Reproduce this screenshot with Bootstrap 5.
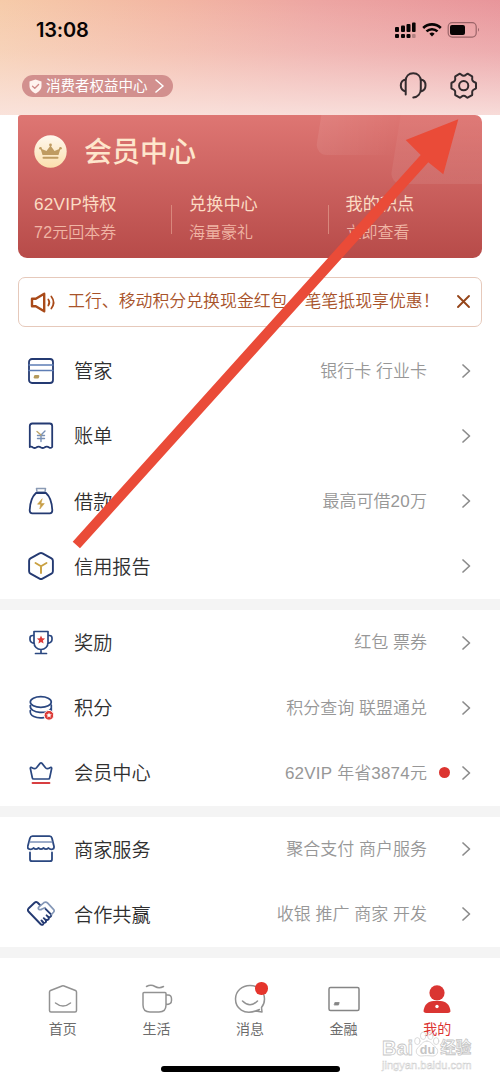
<!DOCTYPE html>
<html lang="zh-CN">
<head>
<meta charset="utf-8">
<meta name="viewport" content="width=device-width, initial-scale=1">
<title>我的</title>
<link href="https://cdn.jsdelivr.net/npm/bootstrap@5.3.0/dist/css/bootstrap.min.css" rel="stylesheet">
<style>
body{font-family:"Liberation Sans","Noto Sans CJK SC",sans-serif;color:#333;background:#fff;width:500px;height:1082px;line-height:1.2}
svg{display:block;fill:none;stroke-linecap:round;stroke-linejoin:round;flex:none}
.screen{width:500px;height:1082px}
.top-area{height:115px;background:linear-gradient(to bottom,rgba(250,230,225,0) 0%,rgba(250,230,225,.3) 45%,rgba(250,230,226,.88) 100%),linear-gradient(97deg,#f6cba9 0%,#f3b7a3 32%,#eda5a2 62%,#e8949a 100%)}
.status-bar{height:60px;padding:0 20px 0 36px}
.clock{font-family:Inter,sans-serif;font-weight:600;font-size:20px;color:#080404;letter-spacing:-.2px}
.rights-pill{height:22px;width:151px;background:#d2908e;color:#fff;font-size:14.5px;padding-left:7px}
.tools{padding:0 22px 0 22px;height:52px}
.vip{margin:0 18px;height:143px;border-radius:3px 7px 9px 9px;background:linear-gradient(#de7673,#b74b49);color:#fbdcc4}
.vip-title{font-size:28px;font-weight:500;color:#fee6cc;padding-top:2px}
.vip-shape{position:absolute;border-radius:0 0 0 12px;transform:skewX(-9deg);background:linear-gradient(rgba(255,255,255,.02),rgba(255,255,255,.08))}
.vip-shape.fading{background:linear-gradient(90deg,rgba(255,255,255,.08),rgba(255,255,255,0))}
.vip-cols{position:relative;padding:0 0 0 16px}
.vip-cols>div{width:155px}
.vip-h{font-size:17.2px;line-height:22px}
.vip-s{font-size:16px;line-height:22px;margin-top:7px;color:#f0b5a5;font-weight:350}
.wide-latin{letter-spacing:.25px}
.vip-line{position:absolute;width:1px;height:29px;background:#d9877c}
.notice{margin:18.5px 18px 0;height:50px;border:1px solid #e6c9bb;border-radius:7px;color:#a8532a;font-size:16.9px;padding:0 10px 0 11px;font-weight:350}
.menu-row{height:65.2px;padding:0 28px 0 27px}
.menu-name{font-size:19.2px;margin-left:19px;font-weight:350;color:#303030;padding-top:2px}
.menu-note{font-size:17px;color:#979797;font-weight:350;white-space:nowrap;text-align:right;margin-right:34px;padding-top:2px}
.menu-note.has-dot{margin-right:12px}
.menu-dot{width:11px;height:11px;border-radius:50%;background:#dc3430;margin-right:11px}
.band{height:11px;background:#f4f4f4}
.tabs{padding:23.500px 16px 0;height:94px}
.tabs>div{width:93.6px;font-size:14px;color:#6c6c6c;font-weight:400}
.tabs span{margin-top:5px;line-height:18px}
.tab-dot{position:absolute;width:12.5px;height:12.5px;border-radius:50%;background:#e5352c;left:52px;top:1px}
.home-bar{width:179px;height:6px;border-radius:3px;background:#000;left:161px;top:1066px}
.arrow-mark{left:0;top:0;z-index:5}
.watermark{left:382px;top:1027px;z-index:4;color:#fff;width:92px}
.wm-line{font-size:20px;line-height:20px;font-weight:700;-webkit-text-stroke:.8px #c6c6c6;height:30px;white-space:nowrap;padding-top:11px}
.wm-url{font-size:11.1px;line-height:12px;-webkit-text-stroke:.45px #ccc;margin-top:2px;white-space:nowrap}
</style>
</head>
<body>
<div class="screen position-relative overflow-hidden">
<header class="top-area">
  <div class="status-bar d-flex align-items-center justify-content-between">
    <span class="clock">13:08</span>
    <svg width="86" height="20" viewBox="394 20 86 20">
      <g fill="#080404"><rect x="395" y="27" width="4" height="5" rx="1"/><rect x="401" y="25.5" width="4" height="6.5" rx="1"/><rect x="406.5" y="24" width="4" height="8" rx="1"/><rect x="412" y="22.5" width="3.6" height="9.5" rx="1"/><rect x="395" y="34" width="4" height="4" rx="1"/><rect x="401" y="34" width="4" height="4" rx="1"/><rect x="406.5" y="34" width="4" height="4" rx="1"/><rect x="412" y="34" width="3.6" height="4" rx="1" opacity=".25"/>
      <path d="M432 36.5l-2.6-2.7a3.8 3.8 0 0 1 5.2 0z"/></g>
      <g stroke="#080404" stroke-width="2.6" stroke-linecap="butt"><path d="M423.2 28a12.6 12.6 0 0 1 17.6 0M426.5 31.4a8 8 0 0 1 11 0"/></g>
      <rect x="448.2" y="22.7" width="28" height="14.4" rx="4" stroke="#9a6468" stroke-width="1.2"/><rect x="450" y="25" width="15" height="10" rx="2" fill="#080404"/><path d="M478 27.8q2 2 0 4z" fill="#9a6468"/>
    </svg>
  </div>
  <div class="tools d-flex align-items-center">
    <div class="rights-pill rounded-pill d-flex align-items-center">
      <svg width="13" height="15" viewBox="0 0 13 15"><path d="M6.5.5L12.5 2.6V7c0 3.6-3 6-6 7.5C3.5 13 .5 10.6.5 7V2.6z" fill="#fff3ef"/><path d="M3.5 7.2L5.8 9.3 9.6 5.5" stroke="#cf8a88" stroke-width="1.3"/></svg>
      <span class="ms-1" style="padding-top:1px">消费者权益中心</span>
      <svg class="ms-auto me-2" width="11" height="14" viewBox="0 0 11 14"><path d="M2 1l7 6-7 6" stroke="#fff" stroke-width="1.6"/></svg>
    </div>
    <svg class="ms-auto" width="80" height="30" viewBox="398 71 80 30" stroke="#332b2e" stroke-width="2">
      <path d="M405.7 94.5V81c0-4.6 3-7.8 7.5-7.8s7.6 3.2 7.6 7.8v8c0 4.5-3 8-7.5 8.4M405.7 79.5c-3 .3-4.9 3-4.9 6 0 3.3 1.9 5.3 4.9 6M420.8 79.5c3 .3 4.7 3 4.7 6 0 3.3-1.7 5.3-4.7 6"/>
      <circle cx="463.7" cy="85.7" r="4.6"/>
      <path d="M459.8 73.7c1 0 1.9 2 3.9 2s2.9-2 3.9-2l4.500 2.600c.6 1-.5 2.600.4 4.300 1 1.700 2.900 1.500 3.500 2.500v5.200c-.6 1-2.500.8-3.500 2.500-.9 1.700.2 3.400-.4 4.300l-4.500 2.600c-1 0-1.900-2-3.900-2s-2.900 2-3.900 2l-4.500-2.600c-.6-.9.500-2.600-.4-4.300-1-1.700-2.900-1.500-3.500-2.500v-5.200c.6-1 2.500-.8 3.500-2.500.9-1.700-.2-3.300.4-4.300z"/>
    </svg>
  </div>
</header>
<section class="vip position-relative overflow-hidden">
  <div class="vip-shape fading" style="left:301px;top:-10px;width:80px;height:50px"></div>
  <div class="vip-shape" style="left:378px;top:-10px;width:120px;height:79px"></div>
  <div class="d-flex align-items-center" style="height:73px;padding-left:16px">
    <svg width="33" height="33" viewBox="0 0 33 33"><defs><linearGradient id="gold" x2="0" y2="1"><stop stop-color="#fff8ee"/><stop offset="1" stop-color="#fbdfad"/></linearGradient></defs><circle cx="16.500" cy="16.500" r="16.200" fill="url(#gold)"/><path d="M8.500 20L6.500 13.500l6 2.500 4-5.500 4 5.500 6-2.500-2 6.500z" fill="#bf9b61"/><path d="M9.500 22.700h14" stroke="#bf9b61" stroke-width="2"/><g fill="#bf9b61"><circle cx="6.500" cy="13.200" r="1.300"/><circle cx="16.500" cy="10" r="1.400"/><circle cx="26.500" cy="13.200" r="1.300"/></g></svg>
    <span class="vip-title" style="margin-left:17px">会员中心</span>
  </div>
  <div class="vip-cols d-flex" style="padding-top:5px">
    <div><div class="vip-h"><span class="wide-latin">62VIP</span>特权</div><div class="vip-s"><span class="wide-latin">72</span>元回本券</div></div>
    <div style="width:156.500px"><div class="vip-h">兑换中心</div><div class="vip-s">海量豪礼</div></div>
    <div style="width:120px"><div class="vip-h">我的积点</div><div class="vip-s">立即查看</div></div>
    <i class="vip-line" style="left:153px;top:17px"></i><i class="vip-line" style="left:310px;top:17px"></i>
  </div>
</section>
<div class="notice d-flex align-items-center position-relative">
  <svg width="27" height="22" viewBox="30 290 27 22" stroke="#a94a19"><path d="M32 297.700v7.600h3.800l8.400 5v-17.600l-8.400 5z" stroke-width="2.400"/><path d="M48.300 298.500q2.200 3 0 6M51.300 295.500q4.600 6 0 12" stroke-width="1.700"/></svg>
  <span class="text-nowrap" style="margin-left:11px;padding-top:2px">工行、移动积分兑换现金红包，笔笔抵现享优惠！</span>
  <svg class="position-absolute" style="left:437px" width="15" height="15" viewBox="0 0 15 15"><path d="M2 2l11 11M13 2L2 13" stroke="#954519" stroke-width="1.900"/></svg>
</div>
<main style="margin-top:11.700px">
  <div class="menu-row d-flex align-items-center"><svg width="28" height="28" viewBox="0 0 28 28" stroke="#243a72" stroke-width="1.800"><rect x="2" y="2" width="24" height="24" rx="3"/><path d="M2 8h24M2 13.500h24" stroke="#5e7db5" stroke-width="1.300"/><path d="M7.500 20.500h3.500l.5-1.500H8z" stroke="#b69a5b" fill="#b69a5b"/></svg><span class="menu-name">管家</span><span class="menu-note ms-auto">银行卡 行业卡</span><svg width="11" height="16" viewBox="0 0 11 16"><path d="M2 2l6.500 6L2 14" stroke="#8c8c8c" stroke-width="1.700"/></svg></div>
  <div class="menu-row d-flex align-items-center"><svg width="28" height="28" viewBox="0 0 28 28" stroke="#243a72" stroke-width="1.800"><path d="M2.800 25V4q0-2.500 2.500-2.500h17.400q2.500 0 2.500 2.500v21q-1.400 1.500-3 .5-2.400-1.800-4.800 0-1.700 1-3.400 0-2.400-1.800-4.800 0-1.600 1-3.200 0-1.700-1.300-3.200-.5z"/><g stroke="#7890b5" stroke-width="1.400"><path d="M14 13v6.500M10.500 13.500h7M10.500 16.500h7M18 9l-4 4"/><path d="M10 9.500l4 3.500" stroke="#c0a568"/></g></svg><span class="menu-name">账单</span><svg class="ms-auto" width="11" height="16" viewBox="0 0 11 16"><path d="M2 2l6.500 6L2 14" stroke="#8c8c8c" stroke-width="1.700"/></svg></div>
  <div class="menu-row d-flex align-items-center"><svg width="28" height="28" viewBox="0 0 28 28" stroke="#243a72" stroke-width="1.800"><path d="M10 5L9.500 1.500h9L18 5z" stroke="#8a9ab4" stroke-width="1.500"/><path d="M9 6h10c4.500 4 6 9 6.300 17.500q0 2.800-2.600 2.800H5.300q-2.600 0-2.600-2.800C3 15 4.500 10 9 6z"/><path d="M15 12l-4.500 5.200h3.200L12.800 22l4.500-5.400h-3.200z" fill="#c79d45" stroke="#c79d45" stroke-width=".6"/></svg><span class="menu-name">借款</span><span class="menu-note ms-auto">最高可借<span class="wide-latin">20</span>万</span><svg width="11" height="16" viewBox="0 0 11 16"><path d="M2 2l6.500 6L2 14" stroke="#8c8c8c" stroke-width="1.700"/></svg></div>
  <div class="menu-row d-flex align-items-center"><svg width="28" height="28" viewBox="0 0 28 28" stroke="#243a72" stroke-width="1.900"><path d="M12.500 1.400q1.500-.8 3 0l9 5q1.400.8 1.400 2.400v10.400q0 1.600-1.400 2.400l-9 5q-1.500.8-3 0l-9-5q-1.400-.8-1.400-2.400V8.800q0-1.600 1.400-2.400z"/><path d="M8.500 11l5.500 3.200 5.500-3.200M14 14.200V21" stroke="#c9a040"/></svg><span class="menu-name">信用报告</span><svg class="ms-auto" width="11" height="16" viewBox="0 0 11 16"><path d="M2 2l6.500 6L2 14" stroke="#8c8c8c" stroke-width="1.700"/></svg></div>
  <div class="band"></div>
  <div class="menu-row d-flex align-items-center"><svg width="28" height="28" viewBox="0 0 28 28" stroke="#2a4780" stroke-width="1.700"><path d="M7 2.500h14v11c0 4-3 7-7 7s-7-3-7-7zM7 6.500H5.500Q3 6.500 3 9v1.500q0 3 4.300 4M21 6.500h1.500Q25 6.500 25 9v1.500q0 3-4.300 4M14 20.500V24M8.500 24.500h11"/><path d="M14 6.500l1.200 2.700 2.900.3-2.200 2 .7 2.900-2.600-1.500-2.600 1.500.7-2.900-2.200-2 2.900-.3z" fill="#dc3b38" stroke="none"/></svg><span class="menu-name">奖励</span><span class="menu-note ms-auto">红包 票券</span><svg width="11" height="16" viewBox="0 0 11 16"><path d="M2 2l6.500 6L2 14" stroke="#8c8c8c" stroke-width="1.700"/></svg></div>
  <div class="menu-row d-flex align-items-center"><svg width="28" height="28" viewBox="0 0 28 28" stroke="#2a4780" stroke-width="1.700"><ellipse cx="13.800" cy="8" rx="10.500" ry="5.300"/><path d="M3.300 11.500c-1 8.500 19.500 9 21 2.500v-3M3.300 16.500c-1 5.500 6 8.300 13.500 7.200M24.300 14v2.500"/><circle cx="22" cy="21.300" r="4.900" fill="#dc3b38" stroke="#fff" stroke-width="1"/><path d="M22 18.500l.8 1.800 2 .1-1.500 1.300.5 2-1.800-1.100-1.800 1.100.5-2-1.500-1.300 2-.1z" fill="#fff" stroke="none"/></svg><span class="menu-name">积分</span><span class="menu-note ms-auto">积分查询 联盟通兑</span><svg width="11" height="16" viewBox="0 0 11 16"><path d="M2 2l6.500 6L2 14" stroke="#8c8c8c" stroke-width="1.700"/></svg></div>
  <div class="menu-row d-flex align-items-center"><svg width="28" height="28" viewBox="0 0 28 28" stroke="#2a4780" stroke-width="1.700"><path d="M6.700 20q-1.200 0-1.400-1.200L3.300 9.300c0-1 1-1.300 1.600-.6 1.200 1.200 3.500 1.200 4.600 0L13 4.400q1-1.100 2 0l3.500 4.300c1.100 1.200 3.400 1.200 4.600 0 .6-.7 1.600-.4 1.600.6l-2 9.500q-.2 1.200-1.400 1.200z"/><path d="M5.500 24h17" stroke="#d83e40" stroke-width="1.800"/></svg><span class="menu-name">会员中心</span><span class="menu-note has-dot ms-auto"><span class="wide-latin">62VIP</span> 年省<span class="wide-latin">3874</span>元</span><i class="menu-dot"></i><svg width="11" height="16" viewBox="0 0 11 16"><path d="M2 2l6.500 6L2 14" stroke="#8c8c8c" stroke-width="1.700"/></svg></div>
  <div class="band"></div>
  <div class="menu-row d-flex align-items-center"><svg width="28" height="28" viewBox="0 0 28 28" stroke="#2a4780" stroke-width="1.800"><path d="M5.500 1.200h17q2 0 2.500 2l2 8.300q.3 2.200-1.500 2.700-2.500.5-4-1.200-2.500 2.300-5 0-2.500 2.300-5 0-2.500 2.300-5 0-1.500 1.700-4 1.200Q.3 13.700.7 11.500l2.200-8.300q.6-2 2.600-2z"/><path d="M3 7h22" stroke="#7d93b9" stroke-width="1.400"/><path d="M3 17.500v6.700q0 2 2 2h18q2 0 2-2v-6.700"/></svg><span class="menu-name">商家服务</span><span class="menu-note ms-auto">聚合支付 商户服务</span><svg width="11" height="16" viewBox="0 0 11 16"><path d="M2 2l6.500 6L2 14" stroke="#8c8c8c" stroke-width="1.700"/></svg></div>
  <div class="menu-row d-flex align-items-center"><svg width="28" height="28" viewBox="0 0 28 28" stroke="#243a72" stroke-width="1.900"><path d="M13 5L10.500 2.500Q9 1.500 7.500 2.700L1.500 8.500Q.3 10 1.500 11.500l12 12.500q1.500 1.500 2.600.3 1-1-.2-2.300l-1.400-1.500M15.500 22q1.800 1.500 3 .4 1.200-1.200-.2-2.700l-1.500-1.500M18.500 19.500q1.800 1.200 2.800 0 1.200-1.300-.2-2.700l-1.500-1.500M21 16.700q1.800 1 2.800-.2 1-1.300-.3-2.600l-5-5.100"/><path d="M24.500 14.500l2-2.200q1.300-1.500 0-3l-6-6.400q-1.500-1.500-3.500-.3l-5 4.200q-1.500 1.700 0 2.600 1.500.7 3-.4l3-1.300" stroke="#8497b7" stroke-width="1.700"/></svg><span class="menu-name">合作共赢</span><span class="menu-note ms-auto">收银 推广 商家 开发</span><svg width="11" height="16" viewBox="0 0 11 16"><path d="M2 2l6.500 6L2 14" stroke="#8c8c8c" stroke-width="1.700"/></svg></div>
  <div class="band"></div>
</main>
<nav class="tabs d-flex">
  <div class="d-flex flex-column align-items-center"><svg width="34" height="34" viewBox="0 0 34 34" stroke="#929292" stroke-width="1.500"><path d="M3.500 11q0-1 1-1.500L16 5q1-.4 2 0l11.500 4.500q1 .5 1 1.500v18.500q0 1.500-1.500 1.500H5q-1.500 0-1.500-1.500z"/><path d="M9.500 22q7.500 6 15 0"/></svg><span>首页</span></div>
  <div class="d-flex flex-column align-items-center"><svg width="34" height="34" viewBox="0 0 34 34" stroke="#929292" stroke-width="1.500"><path d="M5 11.500h21q1 0 1 1V24q0 7-7 7h-9q-7 0-7-7V12.500q0-1 1-1zM27 14h2q3.500 0 3.500 4v1.500q0 4-5.500 4M7.500 5.500q4.500-2.500 8.500 0t8.500 0"/></svg><span>生活</span></div>
  <div class="d-flex flex-column align-items-center position-relative"><svg width="34" height="34" viewBox="0 0 34 34" stroke="#929292" stroke-width="1.500"><path d="M26.500 28.500C10 36 2.500 26 2.500 18S9 4.500 17 4.500 31.500 10 31.500 18q0 5-3 8.500l.5 4.500-6.500-1"/><path d="M9.500 20q7.500 7.500 15 0"/></svg><i class="tab-dot"></i><span>消息</span></div>
  <div class="d-flex flex-column align-items-center"><svg width="34" height="34" viewBox="0 0 34 34" stroke="#858585" stroke-width="1.500"><rect x="2" y="6.500" width="30" height="23" rx="1.500"/><path d="M7.500 24h4l.7-2.500h-4z" fill="#858585" stroke-width=".8"/></svg><span>金融</span></div>
  <div class="d-flex flex-column align-items-center" style="color:#dc3431"><svg width="34" height="34" viewBox="0 0 34 34"><circle cx="17" cy="11.800" r="7.600" fill="#da3532"/><path d="M3.500 30.500C4 23.500 8.500 20 13.500 20h7c5 0 9.500 3.500 10 10.500q-1 1.500-3 1.500h-21q-2 0-3-1.500z" fill="#da3532"/><circle cx="17" cy="25.500" r="1.700" fill="#fff"/></svg><span>我的</span></div>
</nav>
<div class="home-bar position-absolute"></div>
<div class="watermark position-absolute">
  <div class="wm-line d-flex"><span>Bai</span><svg width="27" height="28" viewBox="0 0 28 28" style="margin:-9px 0 0;overflow:visible" stroke="#cfcfcf" stroke-width=".8"><g fill="#fff" fill-opacity=".55"><ellipse cx="4.500" cy="12" rx="2.800" ry="3.600"/><ellipse cx="10.500" cy="6.500" rx="2.800" ry="3.800"/><ellipse cx="18" cy="6.500" rx="2.800" ry="3.800"/><ellipse cx="24" cy="12" rx="2.800" ry="3.600"/><path fill-opacity="1" d="M14.500 12c4 0 6 4 9.500 7s1 9-4 8.500-7-.5-11 0-8-4.500-4-8.500 5.500-7 9.500-7z"/></g><text x="7" y="25" font-size="13" stroke="none" fill="#c4c4c4" style="-webkit-text-stroke:0">du</text></svg><span style="font-size:15.500px">经验</span></div>
  <div class="wm-url">jingyan.baidu.com</div>
</div>
<svg class="arrow-mark position-absolute" width="500" height="600" viewBox="0 0 500 600"><path d="M458.300 119.300L443.300 174.300 428.300 162.300 80 548.300 72.700 541.700 420.700 155 405.700 140z" fill="#ea4b38"/></svg>
</div>
<script src="https://cdn.jsdelivr.net/npm/bootstrap@5.3.0/dist/js/bootstrap.bundle.min.js"></script>
</body>
</html>
